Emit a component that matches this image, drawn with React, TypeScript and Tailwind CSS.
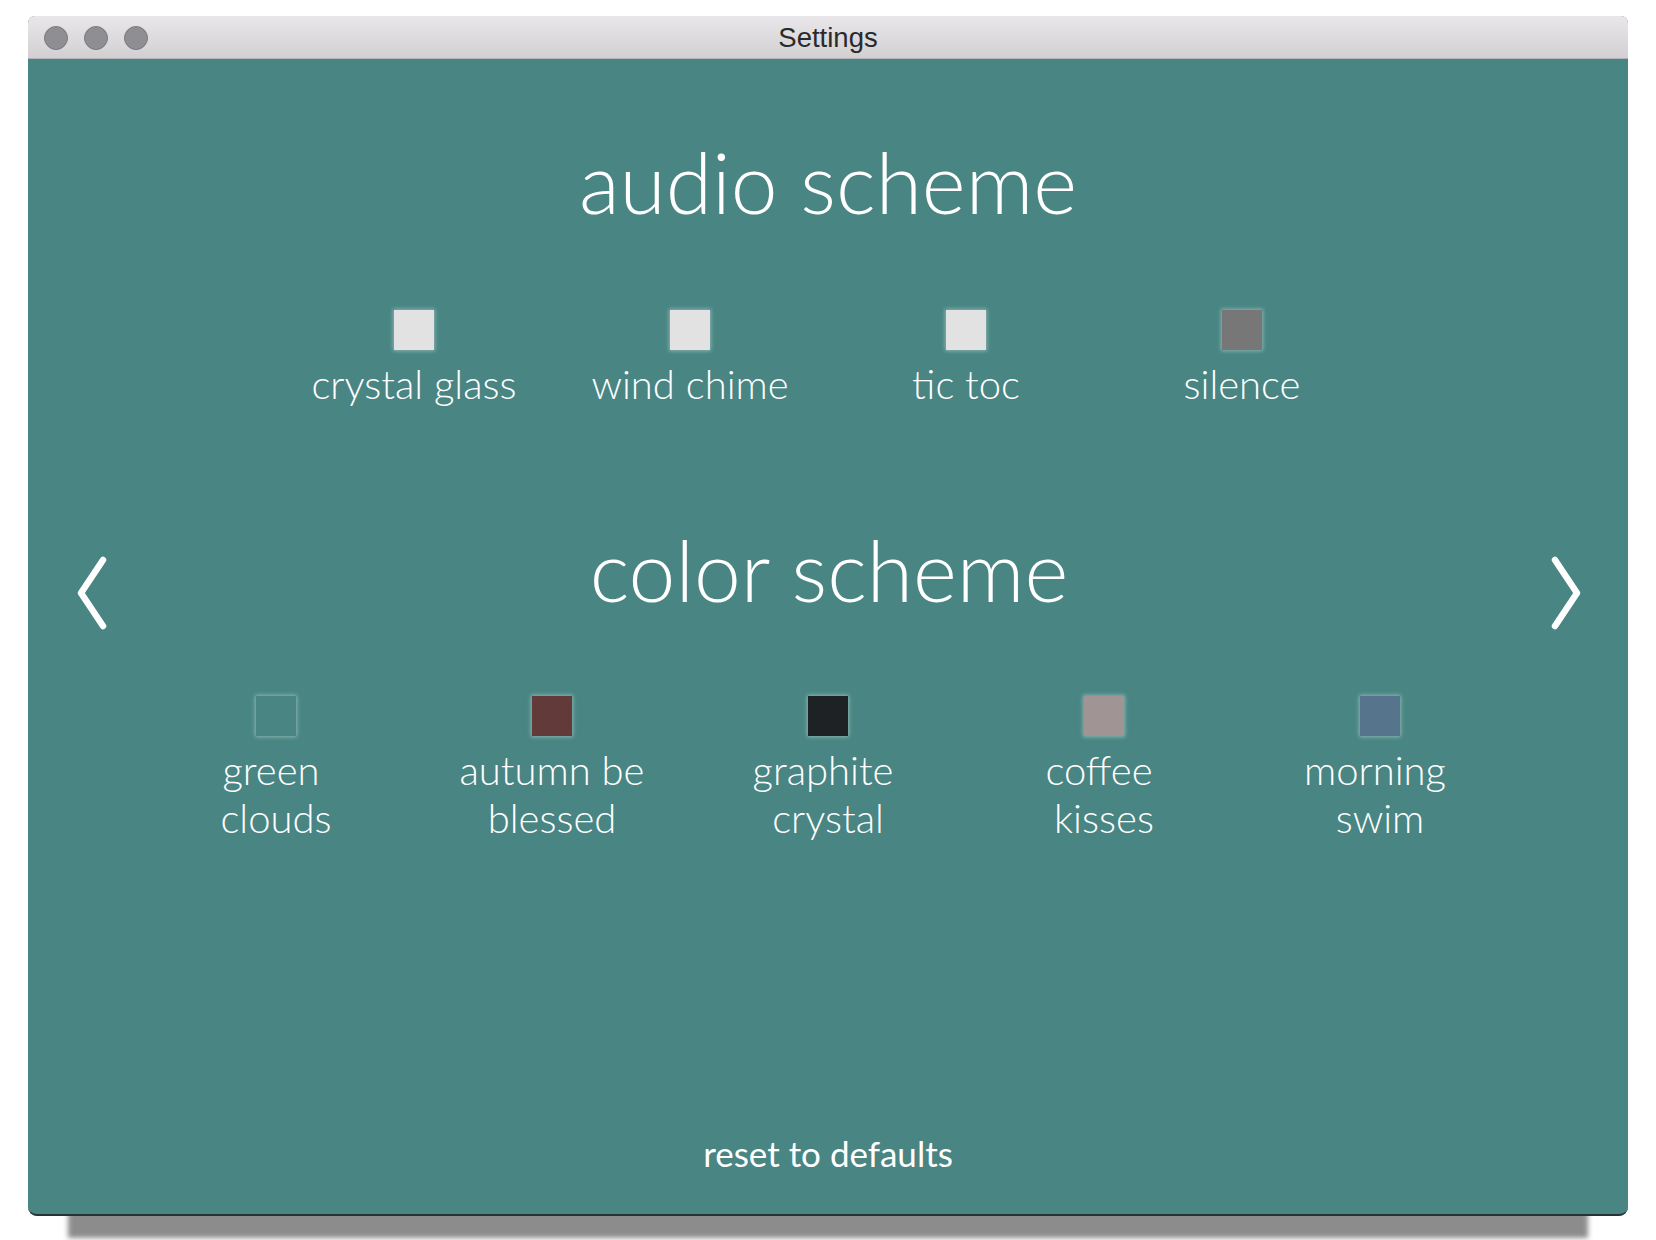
import React from "react";

const audio = [
  { label: ["crystal glass"], color: "bg-[#e2e2e2]" },
  { label: ["wind chime"], color: "bg-[#e2e2e2]" },
  { label: ["tic toc"], color: "bg-[#e2e2e2]" },
  { label: ["silence"], color: "bg-[#777777]" },
];

const colors = [
  { label: ["green", "clouds"], color: "bg-[#498583]", pad: true },
  { label: ["autumn be", "blessed"], color: "bg-[#623a3a]", pad: false },
  { label: ["graphite", "crystal"], color: "bg-[#1e2224]", pad: true },
  { label: ["coffee", "kisses"], color: "bg-[#a09594]", pad: true },
  { label: ["morning", "swim"], color: "bg-[#56758d]", pad: true },
];

function Swatch({ label, color, pad }: { label: string[]; color: string; pad?: boolean }) {
  return (
    <div className="w-[276px] flex flex-col items-center">
      <div
        className={`w-[40px] h-[40px] ${color} shadow-[0_0_4px_1px_rgba(220,240,238,0.45)]`}
      />
      <div className="mt-[10px] text-[40px] leading-[48px] font-light text-white text-center">
        {label.map((l, i) => (
          <div key={i} className={pad && i === 0 ? "pr-[10px]" : ""}>
            {l}
          </div>
        ))}
      </div>
    </div>
  );
}

function Chevron({ dir }: { dir: "left" | "right" }) {
  return (
    <svg width="34" height="74" viewBox="0 0 34 74" className="block">
      {dir === "left" ? (
        <polyline
          points="27,4 5,37 27,70"
          fill="none"
          stroke="white"
          strokeWidth="6.5"
          strokeLinecap="round"
          strokeLinejoin="round"
        />
      ) : (
        <polyline
          points="7,4 29,37 7,70"
          fill="none"
          stroke="white"
          strokeWidth="6.5"
          strokeLinecap="round"
          strokeLinejoin="round"
        />
      )}
    </svg>
  );
}

export default function App() {
  return (
    <div className="w-[1656px] h-[1240px] bg-white overflow-hidden pt-[16px] pl-[28px]">
      <div className="w-[1600px] h-[1200px] flex flex-col rounded-t-[7px] rounded-b-[9px] shadow-[0_62px_5px_-40px_rgba(0,0,0,0.45)] bg-[#498583]">
        {/* Title bar */}
        <div
          className="relative h-[43px] shrink-0 rounded-t-[7px] border-b border-[#b4b3b5] bg-gradient-to-b from-[#e9e7ea] to-[#d2d0d3] flex items-center justify-center"
          style={{ fontFamily: '"Liberation Sans", Arial, sans-serif' }}
        >
          <div className="absolute left-[16px] top-[10px] flex gap-[16px]">
            <div className="w-[24px] h-[24px] rounded-full bg-[#8f8e92] border border-[#7a797d]" />
            <div className="w-[24px] h-[24px] rounded-full bg-[#8f8e92] border border-[#7a797d]" />
            <div className="w-[24px] h-[24px] rounded-full bg-[#8f8e92] border border-[#7a797d]" />
          </div>
          <span className="text-[27.5px] text-[#2a2a2a] leading-none mt-[2px]">Settings</span>
        </div>

        {/* Content */}
        <div
          className="relative flex-1 flex flex-col items-center rounded-b-[9px] border-b-2 border-[#253433] text-white"
          style={{ fontFamily: "Lato, 'Open Sans', sans-serif" }}
        >
          <h1 className="mt-[81px] text-[84px] leading-none font-light">audio scheme</h1>
          <div className="mt-[86px] flex">
            {audio.map((a) => (
              <Swatch key={a.label[0]} label={a.label} color={a.color} />
            ))}
          </div>

          <div className="mt-[120px] w-full h-[84px] flex items-start justify-between pl-[48px] pr-[46px]">
            <div className="mt-[28px]">
              <Chevron dir="left" />
            </div>
            <h1 className="text-[84px] leading-none font-light">color scheme</h1>
            <div className="mt-[28px]">
              <Chevron dir="right" />
            </div>
          </div>
          <div className="mt-[84px] flex">
            {colors.map((c) => (
              <Swatch key={c.label[0]} label={c.label} color={c.color} pad={c.pad} />
            ))}
          </div>

          <div className="mt-auto mb-[43px] text-[35px] leading-none">reset to defaults</div>
        </div>
      </div>
    </div>
  );
}
